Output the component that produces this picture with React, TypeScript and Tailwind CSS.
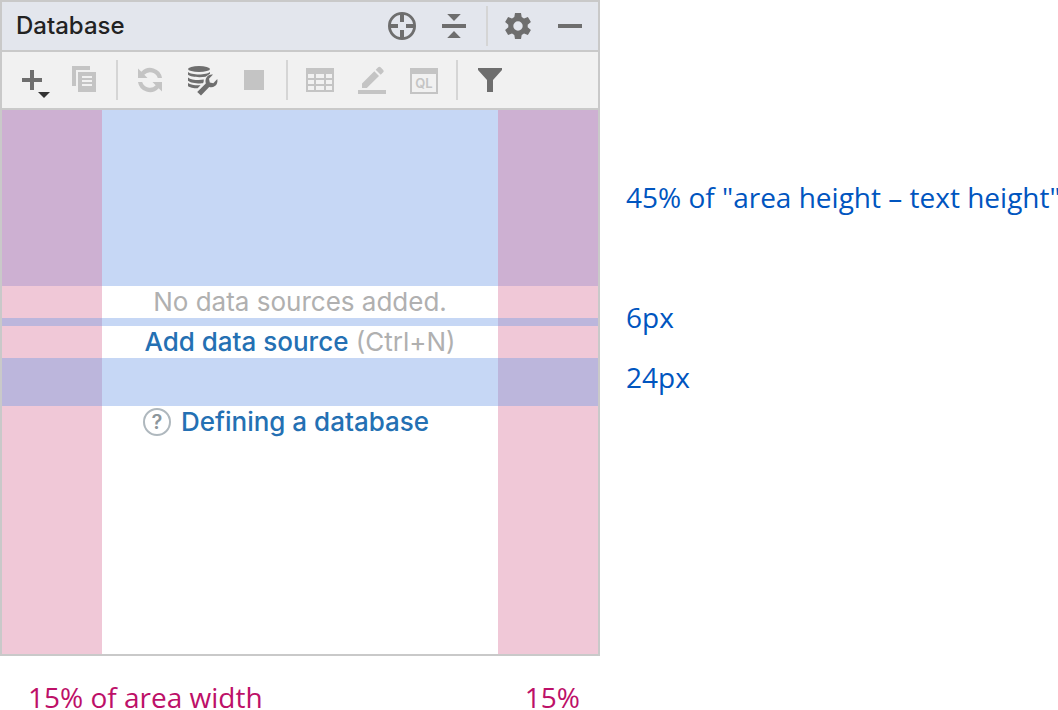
import type { ReactNode } from "react";

const DARK = "#6e6e6e";
const MUTED = "#c4c4c4";

type GlyphProps = { children: ReactNode; color?: string };

function Glyph({ children, color = DARK }: GlyphProps) {
  return (
    <svg viewBox="0 0 32 32" className="size-8 overflow-visible" fill={color} aria-hidden="true">
      {children}
    </svg>
  );
}

function IconButton({ label, disabled, children }: { label: string; disabled?: boolean; children: ReactNode }) {
  return (
    <button type="button" aria-label={label} disabled={disabled} className="size-8 shrink-0">
      <Glyph color={disabled ? MUTED : DARK}>{children}</Glyph>
    </button>
  );
}

function Separator({ margin = "-mx-1" }: { margin?: string }) {
  return <span className={`h-10 w-0.5 shrink-0 bg-[#d5d5d5] ${margin}`} />;
}

function Header() {
  return (
    <header className="flex h-[50px] items-center justify-between border-b-2 border-[#c9c9c9] bg-[#e3e6ed] pr-3 pl-3.5">
      <h1 className="text-[24px] leading-8 font-medium text-[#222222]">Database</h1>
      <div className="flex items-center gap-5">
        <IconButton label="Locate">
          <circle cx="16" cy="16" r="12.6" fill="none" stroke={DARK} strokeWidth="2.8" />
          <path d="M14 3h4v9h-4zM14 20h4v9h-4zM3 14h9v4H3zM20 14h9v4h-9z" />
        </IconButton>
        <IconButton label="Collapse all">
          <path d="M4 14h24v4H4zM9.2 4h13.6L16 11zM9.2 28h13.6L16 21z" />
        </IconButton>
        <Separator margin="-ml-1 -mr-1.5" />
        <IconButton label="Settings">
          <path
            fillRule="evenodd"
            d="M13 3h6l.7 4.1 2.3 1.3 3.9-1.5 3 5.2-3.2 2.6v2.6l3.2 2.6-3 5.2-3.9-1.5-2.3 1.3L19 29h-6l-.7-4.1-2.3-1.3-3.9 1.5-3-5.2 3.2-2.6v-2.6l-3.2-2.6 3-5.2L10 8.400l2.300-1.300zM16 11.300a4.700 4.700 0 1 0 0 9.400a4.700 4.700 0 1 0 0-9.400z"
          />
        </IconButton>
        <IconButton label="Hide">
          <path d="M4 14h24v4H4z" />
        </IconButton>
      </div>
    </header>
  );
}

function Toolbar() {
  return (
    <div role="toolbar" className="flex h-[58px] items-center gap-5 border-b-2 border-[#c9c9c9] bg-[#f1f1f1] px-3.5">
      <IconButton label="New">
        <path d="M14 6h4v8h8v4h-8v8h-4v-8H6v-4h8z" />
        <path d="M22 28h12l-6 6z" fill="#333333" />
      </IconButton>
      <IconButton label="Duplicate" disabled>
        <path d="M4 2h18v4H8v16H4z" />
        <path fillRule="evenodd" d="M10 8h18v20H10zM14 12v2h10v-2zM14 16v2h10v-2zM14 20v2h10v-2z" />
      </IconButton>
      <Separator />
      <IconButton label="Refresh" disabled>
        <path d="M4 4.500v9.500h9.500l-3.200-3.200A8 8 0 0 1 23.800 14H28A12 12 0 0 0 7.300 7.800zM28 27.500V18h-9.500l3.200 3.200A8 8 0 0 1 8.200 18H4a12 12 0 0 0 20.700 6.200z" />
      </IconButton>
      <IconButton label="Data source properties">
        <ellipse cx="13" cy="5" rx="11" ry="3" />
        <path d="M2 8c3 3.300 19 3.300 22 0v1.800c-1.500 1-3 1.800-4.500 2.900C14 13.600 4.500 13.200 2 10.800zM2 13.400c3 2.500 10 3 15.800 2.200l-.2 2.700-.9 1C11 19.700 4.500 18.800 2 16.700zM2 19c2.500 1.900 7.500 2.600 12.600 2.300l-3 3C7.500 24.200 3.500 23.500 2 22.200z" />
        <path d="M11.200 28l8.600-8.500c-1-3.500.2-6.600 2.900-8.200 1.500-.9 3-1 4.300-.8l-4 4.300.8 3.600 3.500.8 4-4.300c.6 3.300-.4 5.700-2.400 7.200-1.800 1.300-3.800 1.500-5.700.9l-8.200 8.500z" />
      </IconButton>
      <IconButton label="Stop" disabled>
        <path d="M6 6h20v20H6z" />
      </IconButton>
      <Separator />
      <IconButton label="Open table" disabled>
        <path
          fillRule="evenodd"
          d="M2 4h28v24H2zM4 10v4h6v-4zM12 10v4h8v-4zM22 10v4h6v-4zM4 16v4h6v-4zM12 16v4h8v-4zM22 16v4h6v-4zM4 22v4h6v-4zM12 22v4h8v-4zM22 22v4h6v-4z"
        />
      </IconButton>
      <IconButton label="Edit" disabled>
        <path d="M2 26h28v4H2zM6 24v-4.500L18.300 7.200l4.700 4.700L10.800 24zM19.700 5.800l2.500-2.500q1.200-1.200 2.400 0l2.600 2.600q1.200 1.200 0 2.400l-2.500 2.500z" />
      </IconButton>
      <IconButton label="Query console" disabled>
        <path fillRule="evenodd" d="M2 4h28v26H2zM4 10v18h24V10z" />
        <text x="16" y="24" textAnchor="middle" className="font-['Inter',sans-serif] text-[13px] font-semibold">
          QL
        </text>
      </IconButton>
      <Separator />
      <IconButton label="Filter">
        <path d="M4 4h24v2l-9 10v12h-6V16L4 6z" />
      </IconButton>
    </div>
  );
}

type BandProps = { height: string; side: string; middle?: string; children?: ReactNode };

function Band({ height, side, middle = "bg-white", children }: BandProps) {
  return (
    <div className={`grid grid-cols-[100px_minmax(0,1fr)_100px] ${height}`}>
      <div className={side} />
      <div className={`flex items-center justify-center whitespace-nowrap ${middle}`}>{children}</div>
      <div className={side} />
    </div>
  );
}

const PINK = "bg-[#f0c8d7]";
const BLUE = "bg-[#c6d7f5]";
const MAUVE = "bg-[#cdb0d2]";
const VIOLET = "bg-[#bcb6dc]";

function EmptyState() {
  return (
    <div className="text-[26px] leading-8">
      <Band height="h-44" side={MAUVE} middle={BLUE} />
      <Band height="h-8" side={PINK}>
        <p className="text-[#b0b0b0]">No data sources added.</p>
      </Band>
      <Band height="h-2" side={VIOLET} middle={BLUE} />
      <Band height="h-8" side={PINK}>
        <p className="text-[#b0b0b0]">
          <a href="#add" className="font-medium text-[#2470b3]">
            Add data source
          </a>{" "}
          (Ctrl+N)
        </p>
      </Band>
      <Band height="h-12" side={VIOLET} middle={BLUE} />
      <Band height="h-8" side={PINK}>
        <a href="#help" className="mr-7 flex items-center gap-2.5 font-medium text-[#2470b3]">
          <span className="flex size-7 items-center justify-center rounded-full border-2 border-[#afb8be] text-[20px] font-semibold text-[#8c969c]">
            ?
          </span>
          Defining a database
        </a>
      </Band>
      <Band height="h-[216px]" side={PINK} />
    </div>
  );
}

export default function App() {
  return (
    <main className="grid grid-cols-[minmax(0,600px)_minmax(0,1fr)] bg-white font-['Open_Sans',sans-serif] text-[28px] leading-10">
      <section className="border-2 border-[#c9c9c9] font-['Inter',sans-serif]">
        <Header />
        <Toolbar />
        <EmptyState />
      </section>
      <aside className="pt-[177px] pl-[26px] whitespace-nowrap text-[#0055bf]">
        <p>45% of "area height – text height"</p>
        <p className="mt-20">6px</p>
        <p className="mt-5">24px</p>
      </aside>
      <footer className="flex justify-between pt-7 pr-5 pl-7 leading-[26px] whitespace-nowrap text-[#bd1068]">
        <p>15% of area width</p>
        <p>15%</p>
      </footer>
    </main>
  );
}
